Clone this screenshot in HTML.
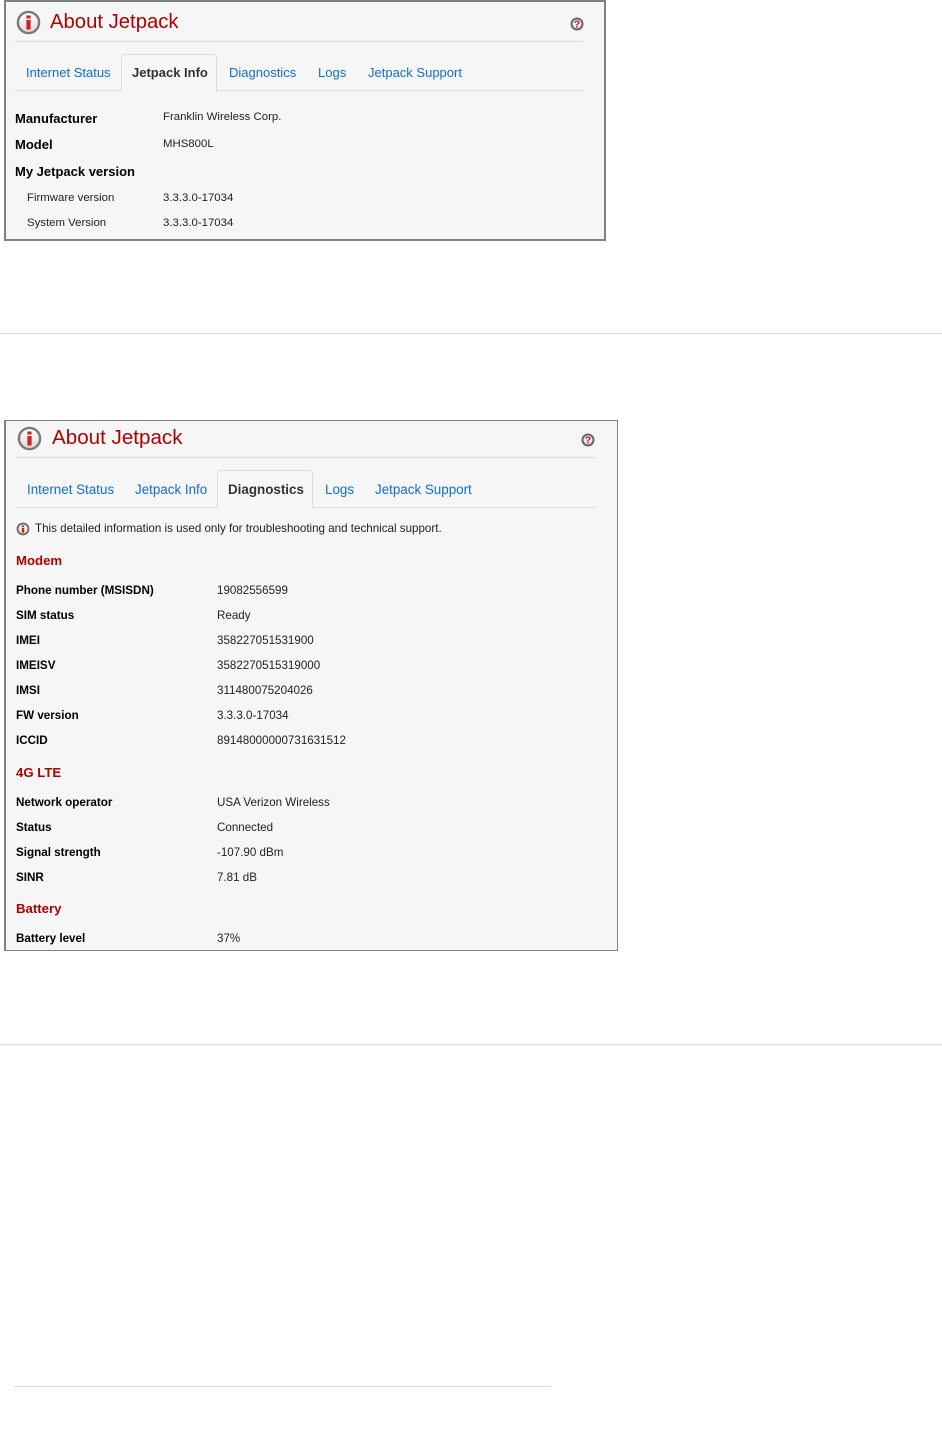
<!DOCTYPE html>
<html>
<head>
<meta charset="utf-8">
<style>
html,body{margin:0;padding:0;background:#fff;}
body{width:942px;height:1439px;position:relative;overflow:hidden;font-family:"Liberation Sans",sans-serif;}
.a{position:absolute;white-space:nowrap;line-height:16px;height:16px;}
.panel{position:absolute;box-sizing:border-box;background:#f6f6f6;border:2px solid #808080;}
.line{position:absolute;height:1px;background:#dcdcdc;}
.h{color:#b00000;line-height:26px;height:26px;margin-top:1px;}
.tab{color:#0f6ecd;}
.act{color:#333;font-weight:bold;}
.tb{position:absolute;box-sizing:border-box;background:#f7f7f7;border:1px solid #dcdcdc;border-bottom:none;border-radius:4px 4px 0 0;}
.t1{font-size:13px;margin-top:1px;}
.t2{font-size:13.4px;margin-top:1px;}
.l1{font-size:13px;font-weight:bold;color:#000;margin-top:1px;}
.v1{font-size:11.4px;color:#222;margin-top:1px;}
.l2{font-size:11.65px;font-weight:bold;color:#000;margin-top:1px;}
.v2{font-size:11.6px;color:#222;margin-top:1px;}
.sec{font-size:13.2px;font-weight:bold;color:#b00000;margin-top:1px;}
</style>
</head>
<body>
<svg width="0" height="0" style="position:absolute"><defs><linearGradient id="g" x1="0" y1="0" x2="0" y2="1"><stop offset="0" stop-color="#ffffff"/><stop offset="1" stop-color="#dcd8d8"/></linearGradient></defs></svg>

<div class="panel" style="left:4px;top:0;width:602px;height:241px;"></div>
<svg class="a" style="left:16px;top:10px;width:25px;height:25px;" viewBox="0 0 25 25"><circle cx="12.5" cy="12.5" r="10.6" fill="url(#g)" stroke="#7a7a7a" stroke-width="2.4"/><rect x="10.4" y="5.5" width="4.2" height="3" fill="#d02020"/><rect x="10.4" y="10" width="4.2" height="9.5" fill="#d02020"/></svg>
<div class="a h" style="left:50px;top:8px;font-size:20.3px;">About Jetpack</div>
<svg class="a" style="left:570px;top:17px;width:14px;height:14px;" viewBox="0 0 14 14"><circle cx="7" cy="7" r="5.5" fill="url(#g)" stroke="#666" stroke-width="2"/><text x="7" y="10.6" font-size="10.5" font-weight="bold" text-anchor="middle" fill="#d01020" font-family="Liberation Sans">?</text></svg>
<div class="line" style="left:15px;top:41px;width:568px;"></div>
<div class="line" style="left:15px;top:90px;width:568px;"></div>
<div class="tb" style="left:121px;top:54px;width:96px;height:37px;"></div>
<div class="a tab t1" style="left:26px;top:64px;">Internet Status</div>
<div class="a act t1" style="left:132px;top:64px;">Jetpack Info</div>
<div class="a tab t1" style="left:229px;top:64px;">Diagnostics</div>
<div class="a tab t1" style="left:318px;top:64px;">Logs</div>
<div class="a tab t1" style="left:368px;top:64px;">Jetpack Support</div>
<div class="a l1" style="left:15px;top:110px;">Manufacturer</div>
<div class="a v1" style="left:163px;top:108px;">Franklin Wireless Corp.</div>
<div class="a l1" style="left:15px;top:136px;">Model</div>
<div class="a v1" style="left:163px;top:135px;">MHS800L</div>
<div class="a l1" style="left:15px;top:163px;">My Jetpack version</div>
<div class="a v1" style="left:27px;top:189px;">Firmware version</div>
<div class="a v1" style="left:163px;top:189px;">3.3.3.0-17034</div>
<div class="a v1" style="left:27px;top:214px;">System Version</div>
<div class="a v1" style="left:163px;top:214px;">3.3.3.0-17034</div>

<div class="line" style="left:0;top:333px;width:942px;"></div>

<div class="panel" style="left:4px;top:420px;width:614px;height:531px;border-width:1px 1px 1px 2px;"></div>
<svg class="a" style="left:17px;top:426px;width:25px;height:25px;" viewBox="0 0 25 25"><circle cx="12.5" cy="12.5" r="10.6" fill="url(#g)" stroke="#7a7a7a" stroke-width="2.4"/><rect x="10.4" y="5.5" width="4.2" height="3" fill="#d02020"/><rect x="10.4" y="10" width="4.2" height="9.5" fill="#d02020"/></svg>
<div class="a h" style="left:52px;top:424px;font-size:20.6px;">About Jetpack</div>
<svg class="a" style="left:581px;top:433px;width:14px;height:14px;" viewBox="0 0 14 14"><circle cx="7" cy="7" r="5.5" fill="url(#g)" stroke="#666" stroke-width="2"/><text x="7" y="10.6" font-size="10.5" font-weight="bold" text-anchor="middle" fill="#d01020" font-family="Liberation Sans">?</text></svg>
<div class="line" style="left:16px;top:457px;width:579px;"></div>
<div class="line" style="left:16px;top:507px;width:579px;"></div>
<div class="tb" style="left:217px;top:470px;width:96px;height:38px;"></div>
<div class="a tab t2" style="left:27px;top:481px;">Internet Status</div>
<div class="a tab t2" style="left:135px;top:481px;">Jetpack Info</div>
<div class="a act t2" style="left:228px;top:481px;">Diagnostics</div>
<div class="a tab t2" style="left:325px;top:481px;">Logs</div>
<div class="a tab t2" style="left:375px;top:481px;">Jetpack Support</div>
<svg class="a" style="left:16px;top:522px;width:14px;height:14px;" viewBox="0 0 14 14"><circle cx="7" cy="7" r="5.5" fill="url(#g)" stroke="#666" stroke-width="1.8"/><rect x="5.8" y="3.4" width="2.4" height="1.7" fill="#d02020"/><rect x="5.8" y="5.9" width="2.4" height="4.8" fill="#d02020"/></svg>
<div class="a v2" style="left:35px;top:520px;">This detailed information is used only for troubleshooting and technical support.</div>

<div class="a sec" style="left:16px;top:552px;">Modem</div>
<div class="a l2" style="left:16px;top:582px;">Phone number (MSISDN)</div><div class="a v2" style="left:217px;top:582px;">19082556599</div>
<div class="a l2" style="left:16px;top:607px;">SIM status</div><div class="a v2" style="left:217px;top:607px;">Ready</div>
<div class="a l2" style="left:16px;top:632px;">IMEI</div><div class="a v2" style="left:217px;top:632px;">358227051531900</div>
<div class="a l2" style="left:16px;top:657px;">IMEISV</div><div class="a v2" style="left:217px;top:657px;">3582270515319000</div>
<div class="a l2" style="left:16px;top:682px;">IMSI</div><div class="a v2" style="left:217px;top:682px;">311480075204026</div>
<div class="a l2" style="left:16px;top:707px;">FW version</div><div class="a v2" style="left:217px;top:707px;">3.3.3.0-17034</div>
<div class="a l2" style="left:16px;top:732px;">ICCID</div><div class="a v2" style="left:217px;top:732px;">89148000000731631512</div>

<div class="a sec" style="left:16px;top:764px;">4G LTE</div>
<div class="a l2" style="left:16px;top:794px;">Network operator</div><div class="a v2" style="left:217px;top:794px;">USA Verizon Wireless</div>
<div class="a l2" style="left:16px;top:819px;">Status</div><div class="a v2" style="left:217px;top:819px;">Connected</div>
<div class="a l2" style="left:16px;top:844px;">Signal strength</div><div class="a v2" style="left:217px;top:844px;">-107.90 dBm</div>
<div class="a l2" style="left:16px;top:869px;">SINR</div><div class="a v2" style="left:217px;top:869px;">7.81 dB</div>

<div class="a sec" style="left:16px;top:900px;">Battery</div>
<div class="a l2" style="left:16px;top:930px;">Battery level</div><div class="a v2" style="left:217px;top:930px;">37%</div>

<div class="line" style="left:0;top:1044px;width:942px;"></div>
<div class="line" style="left:14px;top:1386px;width:537px;"></div>
</body>
</html>
